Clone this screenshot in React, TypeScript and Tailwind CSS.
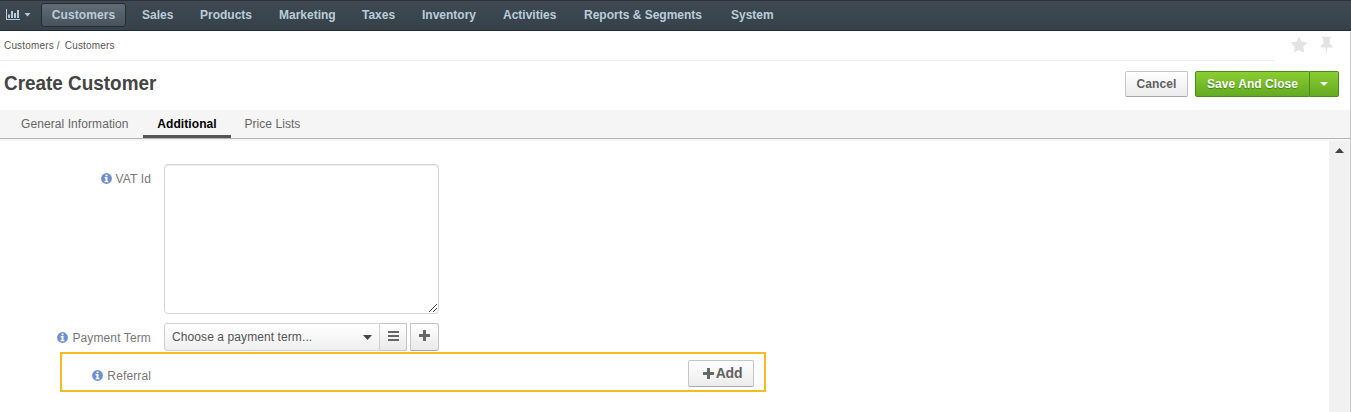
import React from "react";

const nav = [
  { label: "Sales", width: "w-[58px]" },
  { label: "Products", width: "w-[79px]" },
  { label: "Marketing", width: "w-[83px]" },
  { label: "Taxes", width: "w-[60px]" },
  { label: "Inventory", width: "w-[81px]" },
  { label: "Activities", width: "w-[81px]" },
  { label: "Reports & Segments", width: "w-[147px]" },
  { label: "System", width: "w-[70px]" },
];

function InfoIcon() {
  return (
    <svg className="-mt-[2px] h-[11px] w-[11px] shrink-0" viewBox="0 0 11 11">
      <circle cx="5.5" cy="5.5" r="5.4" fill="#6c8fcf" />
      <path d="M4.5 1.5h2v1.7h-2zM3.6 4.1h2.900v3.800h.9v1.300H3.600V7.900h.9V5.400h-.9z" fill="#fff" />
    </svg>
  );
}

function PlusIcon() {
  return (
    <svg className="h-[11px] w-[11px] shrink-0" viewBox="0 0 11 11">
      <path d="M4.500 0h2q.5 0 .5.5V4h3.500q.5 0 .5.5v2q0 .5-.5.5H7v3.500q0 .5-.5.5h-2q-.5 0-.5-.5V7H.5Q0 7 0 6.500v-2Q0 4 .5 4H4V.5Q4 0 4.500 0z" fill="#666" />
    </svg>
  );
}

function FieldLabel({ children }: { children: React.ReactNode }) {
  return (
    <div className="flex h-4 w-[151px] items-center justify-end gap-1 text-[12px] leading-4 tracking-[0.12px] text-[#777]">
      <InfoIcon />
      <span>{children}</span>
    </div>
  );
}

export default function App() {
  return (
    <div className="flex h-[412px] w-[1351px] flex-col overflow-hidden bg-white font-['Liberation_Sans',Arial,sans-serif] text-[#555]">
      <header className="flex h-[31px] shrink-0 items-start border-t border-b border-t-[#2b3137] border-b-[#212a38] bg-linear-to-b from-[#3f4951] to-[#374149] text-[12px] font-bold text-[#b9cdda]">
        <div className="flex h-[29px] w-[41px] items-center gap-[4px] pl-[6px]">
          <svg className="-mt-[2px] h-[11px] w-[14px]" viewBox="0 0 14 11" fill="#b4ccdb">
            <path d="M0 0h1v10h13v1H0z" />
            <path d="M2 5.500h2V9H2zM5 2h2v7H5zM8 4h2v5H8zM11 1h2v8h-2z" />
          </svg>
          <svg className="-mt-[1px] h-[4px] w-[7px]" viewBox="0 0 7 4">
            <path d="M.5 0h6L3.500 3.500z" fill="#b4ccdb" />
          </svg>
        </div>
        <div className="mt-[2px] mr-[6px] flex h-[24px] w-[85px] items-center justify-center rounded-[3px] border border-[#242b32] bg-linear-to-b from-[#626c76] to-[#48525c]">
          <span className="tracking-[0.1px]">Customers</span>
        </div>
        {nav.map((n) => (
          <div key={n.label} className={`flex h-[28px] items-center pl-[10px] whitespace-nowrap ${n.width}`}>
            {n.label}
          </div>
        ))}
      </header>

      <div className="flex min-h-0 flex-1 flex-col border-r border-[#c8c8c8]">
        <div className="flex h-[30px] shrink-0">
          <div className="flex h-[30px] w-[1275px] items-center border-b border-[#eee] pl-1 text-[10px] tracking-[0.17px] text-[#555]">
            <span>Customers /</span>
            <span className="ml-[5px]">Customers</span>
          </div>
          <div className="flex gap-[12px] pt-[5px] pl-[15px]">
            <svg className="h-[17px] w-[18px]" viewBox="0 0 18 17">
              <path d="M9 .3l2.600 5.500 6 .8-4.400 4.200 1.100 6L9 13.900l-5.300 2.900 1.100-6L.4 6.600l6-.8z" fill="#e3e3e3" />
            </svg>
            <svg className="h-[18px] w-[13px]" viewBox="0 0 13 18">
              <path d="M2.500 .8h8q.7 0 .7.8t-.7.8h-.8v5.400q2.800 1.200 2.800 3.700H7.400L6.700 17.500h-.4l-.7-6H.5q0-2.500 2.800-3.700V2.400h-.8q-.7 0-.7-.8t.7-.8z" fill="#e3e3e3" />
            </svg>
          </div>
        </div>

        <div className="flex h-[49px] shrink-0 items-start justify-between pr-[11px] pl-1">
          <h1 className="origin-left scale-x-[0.945] pt-[10px] text-[20px] leading-6 font-bold text-[#444]">Create Customer</h1>
          <div className="flex pt-[10px] text-[12px] font-bold">
            <button className="mr-[7px] h-[26px] w-[63px] rounded-[2px] border border-[#c6c6c6] border-b-[#aaa] bg-linear-to-b from-white to-[#ececec] tracking-[0.1px] text-[#606060]">
              Cancel
            </button>
            <button className="h-[26px] w-[115px] rounded-l-[2px] border border-[#498d18] bg-linear-to-b from-[#8bce30] to-[#64a923] tracking-[0.05px] text-white [text-shadow:0_1px_1px_#3f8114]">
              Save And Close
            </button>
            <button className="flex h-[26px] w-[29px] items-center justify-center rounded-r-[2px] border border-l-0 border-[#498d18] bg-linear-to-b from-[#8bce30] to-[#64a923]">
              <svg className="h-[4px] w-[8px]" viewBox="0 0 8 4">
                <path d="M0 0h8L4 4z" fill="#fff" />
              </svg>
            </button>
          </div>
        </div>

        <nav className="flex h-[29px] shrink-0 border-b border-[#b5b5b5] bg-[#f5f5f5] text-[12px] leading-[28px] text-[#666]">
          <span className="w-[143px] pl-[21px] tracking-[0.08px]">General Information</span>
          <span className="w-[88px] border-b-[3px] border-[#555] text-center font-bold tracking-[0.08px] text-black">Additional</span>
          <span className="pl-[13.500px] tracking-[0.05px]">Price Lists</span>
        </nav>
        <div className="h-[2px] shrink-0 bg-[#f7f7f7]" />

        <div className="flex min-h-0 flex-1">
          <main className="flex flex-1 flex-col">
            <div className="flex pt-[23px]">
              <div className="pt-[7px]">
                <FieldLabel>VAT Id</FieldLabel>
              </div>
              <div className="ml-[13px] flex h-[150px] w-[275px] items-end justify-end rounded-[4px] border border-[#d5d5d5] shadow-[inset_0_1px_1px_#00000013]">
                <svg className="h-[9px] w-[9px]" viewBox="0 0 9 9" stroke="#444" strokeWidth="1">
                  <path d="M0 8L8 0M4 8l4-4" />
                </svg>
              </div>
            </div>
            <div className="mt-[9px] flex h-[28px]">
              <div className="pt-[7px]">
                <FieldLabel>Payment Term</FieldLabel>
              </div>
              <div className="ml-[13px] flex h-[28px] w-[216px] items-center justify-between rounded-l-[3px] border border-[#d0d0d0] bg-linear-to-b from-white to-[#efefef] pr-[7px] pl-[7px] text-[12px] tracking-[0.09px] text-[#555]">
                <span>Choose a payment term...</span>
                <svg className="h-[5px] w-[9px]" viewBox="0 0 9 5">
                  <path d="M0 0h9L4.500 5z" fill="#444" />
                </svg>
              </div>
              <button className="flex h-[28px] w-[27px] items-center justify-center border border-l-0 border-[#c5c5c5] bg-linear-to-b from-white to-[#e9e9e9]">
                <svg className="-mt-[2px] h-[10px] w-[11px]" viewBox="0 0 11 10">
                  <path d="M0 0h11v2H0zM0 4h11v2H0zM0 8h11v2H0z" fill="#666" />
                </svg>
              </button>
              <button className="ml-[3px] flex h-[28px] w-[29px] items-center justify-center rounded-r-[3px] border border-[#c5c5c5] border-b-[#aaa] bg-linear-to-b from-white to-[#e9e9e9] pb-[3px]">
                <PlusIcon />
              </button>
            </div>
            <div className="mt-[1px] ml-[60px] flex h-[40px] w-[706px] justify-between border-2 border-[#f2bd1d]">
              <div className="-ml-[62px] pt-[14px]">
                <FieldLabel>Referral</FieldLabel>
              </div>
              <button className="mt-[6px] mr-[10px] flex h-[27px] w-[66px] items-center justify-center gap-[2px] rounded-[2px] border border-[#c6c6c6] border-b-[#aaa] bg-linear-to-b from-white to-[#ececec] pb-px pl-[3px] text-[14px] font-bold tracking-[-0.2px] text-[#606060]">
                <PlusIcon />
                <span>Add</span>
              </button>
            </div>
          </main>
          <div className="flex w-[21px] justify-center bg-[#f1f1f1] pt-[7px]">
            <svg className="h-[5px] w-[9px]" viewBox="0 0 9 5">
              <path d="M0 5h9L4.500 0z" fill="#444" />
            </svg>
          </div>
        </div>
      </div>
    </div>
  );
}
